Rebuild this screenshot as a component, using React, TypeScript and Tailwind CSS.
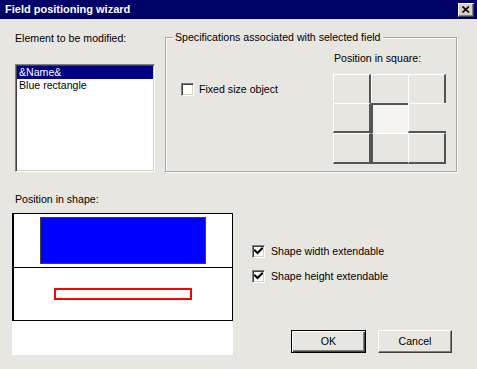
import React from 'react';

const Check = () => (
  <svg width="9" height="9" viewBox="0 0 9 9" className="block">
    <path d="M1 3.5 L3.5 6 L8 1.5" stroke="#000" strokeWidth="2" fill="none" strokeLinecap="square" />
  </svg>
);

const CheckBox = ({ checked }: { checked?: boolean }) => (
  <span className="w-[13px] h-[13px] bg-white border border-t-[#808080] border-l-[#808080] border-r-white border-b-white shadow-[inset_1px_1px_0_#404040,inset_-1px_-1px_0_#d4d0c8] flex items-center justify-center shrink-0">
    {checked && <Check />}
  </span>
);

const cells = [
  'border-t border-l border-t-white border-l-white border-r-2 border-r-[#555]',
  'border-t border-l border-t-white border-l-white',
  'border-t border-l border-t-white border-l-white border-r-2 border-r-[#555]',
  'border-t border-l border-t-white border-l-white border-r-2 border-r-[#555] border-b-2 border-b-[#555]',
  'border-t-2 border-l-2 border-t-[#555] border-l-[#555] bg-[#f4f3ef]',
  'border-t border-l border-t-white border-l-white border-b-2 border-b-[#555]',
  'border-t border-l border-t-white border-l-white border-r-2 border-r-[#555] border-b-2 border-b-[#555]',
  'border-t border-t-white border-l-2 border-l-[#555] border-b-2 border-b-[#555]',
  'border-t border-l border-t-white border-l-white border-r-2 border-r-[#555] border-b-2 border-b-[#555]',
];

export default function App() {
  return (
    <div className="w-[477px] h-[369px] bg-[#e8e6e1] font-['Liberation_Sans',Arial,sans-serif] text-[10.6px] leading-[13px] text-black overflow-hidden">
      {/* title bar */}
      <div className="h-[19px] bg-[#000066] flex items-center justify-between pl-[5px] pr-[2px]">
        <span className="text-white font-bold text-[11px]">Field positioning wizard</span>
        <button className="w-[16px] h-[14px] bg-[#d4d0c8] border border-t-white border-l-white border-r-[#404040] border-b-[#404040] shadow-[inset_-1px_-1px_0_#808080] flex items-center justify-center mr-[1px]">
          <svg width="8" height="7" viewBox="0 0 8 7">
            <path d="M0.5 0.5 L7 6.5 M7 0.5 L0.5 6.5" stroke="#000" strokeWidth="1.6" />
          </svg>
        </button>
      </div>

      {/* top row */}
      <div className="flex pt-[13px]">
        <div className="ml-[15px] w-[140px] flex flex-col">
          <span>Element to be modified:</span>
          <div className="mt-[19px] h-[108px] bg-white border border-t-[#808080] border-l-[#808080] border-r-white border-b-white shadow-[inset_1px_1px_0_#404040,inset_-1px_-1px_0_#d4d0c8] p-[1px]">
            <div className="bg-[#000080] text-white pl-[2px] h-[13px]">&amp;Name&amp;</div>
            <div className="pl-[2px] h-[13px]">Blue rectangle</div>
          </div>
        </div>

        <div className="relative ml-[10px] mt-[5px] w-[292px] h-[135px] border border-[#aca899] shadow-[1px_1px_0_white,inset_1px_1px_0_white] flex">
          <span className="absolute left-[7px] -top-[7px] px-[2px] bg-[#e8e6e1]">
            Specifications associated with selected field
          </span>
          <div className="pl-[15px] pt-[45px] flex items-start gap-[5px]">
            <CheckBox />
            <span>Fixed size object</span>
          </div>
          <div className="ml-auto mr-[10px] pt-[14px] flex flex-col">
            <span className="pl-[1px]">Position in square:</span>
            <div className="mt-[9px] grid grid-cols-[38px_37px_38px] grid-rows-[29px_30px_31px]">
              {cells.map((c, i) => (
                <div key={i} className={c} />
              ))}
            </div>
          </div>
        </div>
      </div>

      {/* position in shape */}
      <div className="ml-[15px] mt-[21px]">Position in shape:</div>

      <div className="flex mt-[7px]">
        <div className="ml-[12px] w-[221px] h-[142px] bg-white">
          <div className="h-[108px] border border-black border-l-2 flex flex-col">
            <div className="flex-1 flex items-center justify-center border-b border-b-black">
              <div className="w-[166px] h-[47px] bg-[#0000ff] border border-[#404040]" />
            </div>
            <div className="flex-1 flex items-center justify-center">
              <div className="w-[138px] h-[12px] border-2 border-[#ff0000] bg-white" />
            </div>
          </div>
        </div>

        <div className="ml-[19px] flex-1 flex flex-col pt-[32px]">
          <div className="flex items-center gap-[6px]">
            <CheckBox checked />
            <span>Shape width extendable</span>
          </div>
          <div className="flex items-center gap-[6px] mt-[12px]">
            <CheckBox checked />
            <span>Shape height extendable</span>
          </div>
          <div className="flex justify-end gap-[12px] pr-[25px] mt-[47px]">
            <button className="w-[75px] h-[23px] bg-[#e8e6e1] border border-black shadow-[inset_1px_1px_0_white,inset_-1px_-1px_0_#404040,inset_-2px_-2px_0_#808080]">
              OK
            </button>
            <button className="w-[74px] h-[23px] bg-[#e8e6e1] border border-t-white border-l-white border-r-[#404040] border-b-[#404040] shadow-[inset_-1px_-1px_0_#808080]">
              Cancel
            </button>
          </div>
        </div>
      </div>
    </div>
  );
}
